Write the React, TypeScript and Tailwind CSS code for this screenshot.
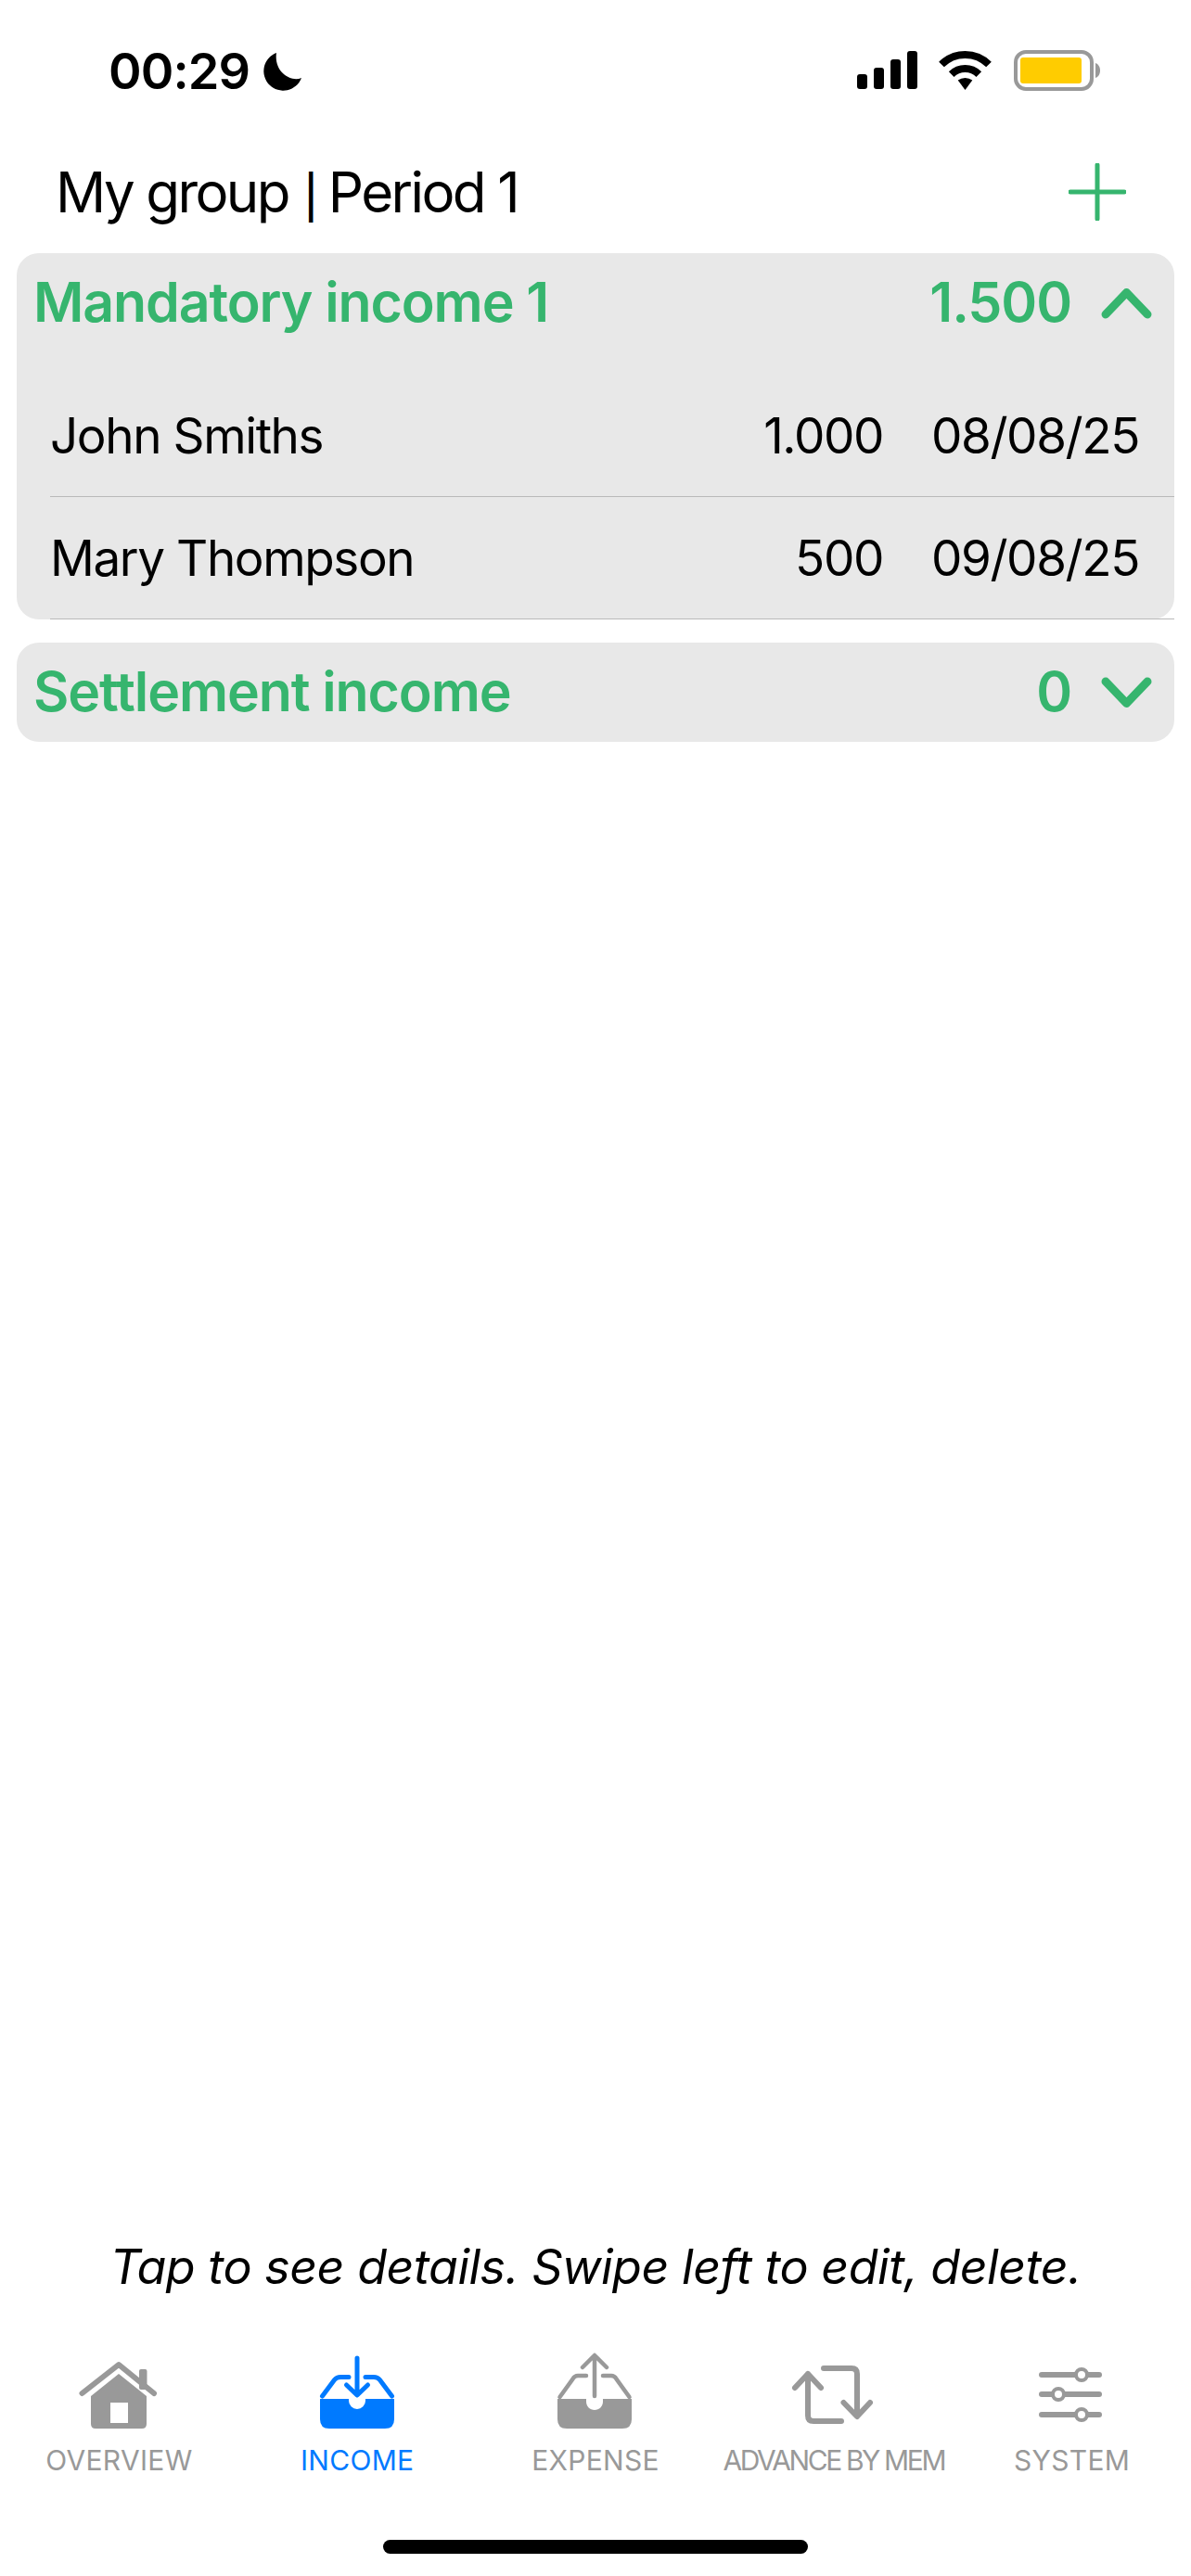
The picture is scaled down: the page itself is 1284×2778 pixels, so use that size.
import React from "react";

const GREEN = "#36B56E";
const GRAY = "#999999";
const BLUE = "#007AFF";

function Signal() {
  return (
    <svg width="66" height="42" viewBox="0 0 66 42" className="block">
      <rect x="1" y="25" width="11" height="16" rx="3" fill="#000" />
      <rect x="19" y="18" width="11" height="23" rx="3" fill="#000" />
      <rect x="37" y="9" width="11" height="32" rx="3" fill="#000" />
      <rect x="55" y="0" width="11" height="41" rx="3" fill="#000" />
    </svg>
  );
}

function Wifi() {
  return (
    <svg width="58" height="44" viewBox="0 0 58 44" className="block">
      <path d="M3 15.5A36 36 0 0 1 54 15.5" fill="none" stroke="#000" strokeWidth="8" />
      <path d="M13.7 26.2A21 21 0 0 1 43.3 26.2" fill="none" stroke="#000" strokeWidth="8" />
      <path d="M28.5 43L20.7 32.5A13 13 0 0 1 36.3 32.5Z" fill="#000" />
    </svg>
  );
}

function Battery() {
  return (
    <svg width="94" height="44" viewBox="0 0 94 44" className="block">
      <rect x="2" y="2" width="82" height="40" rx="11" fill="none" stroke={GRAY} strokeWidth="4" />
      <rect x="7" y="8" width="66" height="28" rx="3" fill="#FFCC00" />
      <path d="M88 14C91 15 93 18 93 22C93 26 91 29 88 30Z" fill={GRAY} />
    </svg>
  );
}

function Moon() {
  return (
    <svg width="42" height="42" viewBox="0 0 42 42" className="block">
      <path d="M14 1A21 21 0 1 0 41 28C30 33 11 22 14 1Z" fill="#000" />
    </svg>
  );
}

function Chevron({ up }: { up: boolean }) {
  return (
    <svg width="56" height="34" viewBox="0 0 56 34" className="block">
      <path
        d={up ? "M5 29L27.5 5.5L50 29" : "M5 5L27.5 28.5L50 5"}
        fill="none"
        stroke={GREEN}
        strokeWidth="9"
        strokeLinecap="round"
        strokeLinejoin="round"
      />
    </svg>
  );
}

function Plus() {
  return (
    <svg width="62" height="62" viewBox="0 0 62 62" className="block">
      <path d="M31 2V60M2 31H60" fill="none" stroke={GREEN} strokeWidth="5" strokeLinecap="round" />
    </svg>
  );
}

function HouseIcon() {
  return (
    <svg width="100" height="84" viewBox="0 0 100 84" className="block">
      <rect x="72" y="20" width="8.5" height="22" rx="2" fill={GRAY} />
      <path d="M10.5 46L50 15L88 46" fill="none" stroke={GRAY} strokeWidth="6" strokeLinecap="round" strokeLinejoin="round" />
      <path d="M50 25L80 49V79Q80 84 75 84H25Q20 84 20 79V49Z" fill={GRAY} />
      <rect x="41" y="56" width="19" height="22" fill="#fff" />
    </svg>
  );
}

function IncomeIcon() {
  return (
    <svg width="100" height="84" viewBox="0 0 100 84" className="block">
      <path d="M41 28.5H32Q28 28.5 25.5 31.5L12.5 49" fill="none" stroke={BLUE} strokeWidth="5" strokeLinecap="round" />
      <path d="M59 28.5H68Q72 28.5 74.5 31.5L87.5 49" fill="none" stroke={BLUE} strokeWidth="5" strokeLinecap="round" />
      <path d="M10 52H41V54A9 9 0 0 0 59 54V52H90V74Q90 84 80 84H20Q10 84 10 74Z" fill={BLUE} />
      <path d="M50 8V47M38.5 37L50 48L61.5 37" fill="none" stroke={BLUE} strokeWidth="5" strokeLinecap="round" strokeLinejoin="round" />
    </svg>
  );
}

function ExpenseIcon() {
  return (
    <svg width="100" height="84" viewBox="0 0 100 84" className="block">
      <path d="M40 27H31Q27.5 27 25.5 30.5L11.5 50" fill="none" stroke={GRAY} strokeWidth="4.5" strokeLinecap="round" />
      <path d="M58 27H67Q70.5 27 72.5 30.5L86.5 50" fill="none" stroke={GRAY} strokeWidth="4.5" strokeLinecap="round" />
      <path d="M9 52H40V55C40 60 44 64 49 64C54 64 58 60 58 55V52H89V74Q89 84 79 84H19Q9 84 9 74Z" fill={GRAY} />
      <path d="M49 49V6M36 18L49 5L62 18" fill="none" stroke={GRAY} strokeWidth="4.5" strokeLinecap="round" strokeLinejoin="round" />
    </svg>
  );
}

function AdvanceIcon() {
  return (
    <svg width="100" height="84" viewBox="0 0 100 84" className="block">
      <path d="M8 40L22 25L36 40M22 25V70Q22 76 28 76H58" fill="none" stroke={GRAY} strokeWidth="6" strokeLinecap="round" strokeLinejoin="round" />
      <path d="M39 19H69Q75 19 75 25V70M60.5 56L75 71L89 56" fill="none" stroke={GRAY} strokeWidth="6" strokeLinecap="round" strokeLinejoin="round" />
    </svg>
  );
}

function SystemIcon() {
  const knobs: [number, number][] = [[60, 26], [35, 47], [60, 69]];
  return (
    <svg width="100" height="84" viewBox="0 0 100 84" className="block">
      {knobs.map(([x, y]) => (
        <g key={y}>
          <path d={`M17 ${y}H79`} fill="none" stroke={GRAY} strokeWidth="6" strokeLinecap="round" />
          <circle cx={x} cy={y} r="6" fill="#fff" stroke={GRAY} strokeWidth="4" />
        </g>
      ))}
    </svg>
  );
}

function Tab({ label, active, tight, children }: { label: string; active?: boolean; tight?: boolean; children: React.ReactNode }) {
  return (
    <div className="flex flex-col items-center">
      {children}
      <div
        className={`mt-[16px] text-[30px] leading-[36px] whitespace-nowrap ${active ? "text-[#007AFF]" : "text-[#999999]"} ${tight ? "tracking-[-2.4px]" : "tracking-[0.3px]"}`}
      >
        {label}
      </div>
    </div>
  );
}

function Row({ name, amount, date }: { name: string; amount: string; date: string }) {
  return (
    <div className="ml-[36px] h-[132px] pr-[38px] pt-[2px] border-b border-[#b9b9b9] flex items-center text-[53px] text-black tracking-[-1.4px]">
      <div className="flex-1">{name}</div>
      <div>{amount}</div>
      <div className="w-[276px] text-right">{date}</div>
    </div>
  );
}

function Header({ title, total, up }: { title: string; total: string; up: boolean }) {
  return (
    <div className="h-[107px] pl-[18px] pr-[23px] flex items-center font-semibold text-[59px] text-[#36B56E] tracking-[-1.1px]">
      <div className="flex-1">{title}</div>
      <div className="mr-[32px]">{total}</div>
      <Chevron up={up} />
    </div>
  );
}

export default function App() {
  return (
    <div className="w-[1284px] h-[2778px] bg-white flex flex-col font-['Inter','Noto_Sans',sans-serif]">
      <div className="h-[142px] pt-[53px] pl-[117px] pr-[97px] flex justify-between items-start">
        <div className="flex items-center gap-[15px]">
          <span className="text-[54px] leading-[48px] font-semibold text-black tracking-[-0.9px]">00:29</span>
          <Moon />
        </div>
        <div className="flex items-center gap-[23px] pt-[1px]">
          <Signal />
          <Wifi />
          <Battery />
        </div>
      </div>

      <div className="h-[131px] pl-[60px] pr-[70px] pb-[2px] flex items-center justify-between">
        <div className="text-[60px] text-black tracking-[-2.6px]">
          My group <span className="text-[46px] font-medium ml-[2px] mr-[-1px]">|</span> Period 1
        </div>
        <Plus />
      </div>

      <div className="mx-[18px] rounded-[24px] bg-[#e8e8e8]">
        <Header title="Mandatory income 1" total="1.500" up />
        <div className="h-[24px]" />
        <Row name="John Smiths" amount="1.000" date="08/08/25" />
        <Row name="Mary Thompson" amount="500" date="09/08/25" />
      </div>

      <div className="mt-[25px] mx-[18px] rounded-[24px] bg-[#e8e8e8]">
        <Header title="Settlement income" total="0" up={false} />
      </div>

      <div className="flex-1" />

      <div className="text-center italic text-[52px] leading-[64px] text-black tracking-[-0.5px]">
        Tap to see details. Swipe left to edit, delete.
      </div>

      <div className="mt-[58px] grid grid-cols-5">
        <Tab label="OVERVIEW"><HouseIcon /></Tab>
        <Tab label="INCOME" active><IncomeIcon /></Tab>
        <Tab label="EXPENSE"><ExpenseIcon /></Tab>
        <Tab label="ADVANCE BY MEM" tight><AdvanceIcon /></Tab>
        <Tab label="SYSTEM"><SystemIcon /></Tab>
      </div>

      <div className="mt-[68px] mb-[24px] mx-auto w-[458px] h-[15px] rounded-full bg-black" />
    </div>
  );
}
